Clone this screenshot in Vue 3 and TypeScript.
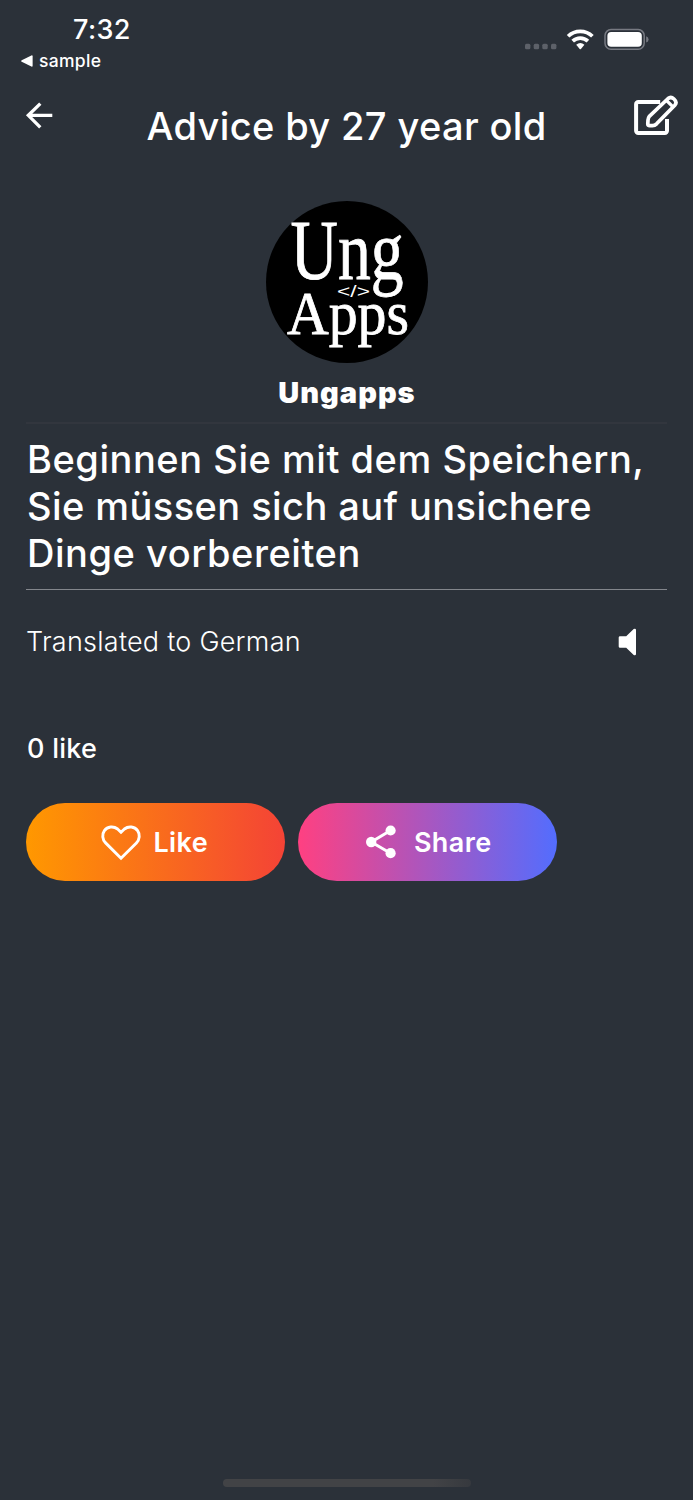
<script setup lang="ts">
const time = '7:32'
const previousApp = 'sample'
const title = 'Advice by 27 year old'
const author = 'Ungapps'
const advice = ['Beginnen Sie mit dem Speichern,', 'Sie müssen sich auf unsichere', 'Dinge vorbereiten']
const likes = 0
</script>

<template>
  <main class="screen">
    <div class="status">
      <div class="clock">
        <span class="time">{{ time }}</span>
        <span class="back-app">
          <svg width="12" height="12" viewBox="0 0 12 12"><path d="M.7 5.2 10.4.4Q11.6 0 11.6 1.2v9.6q0 1.2-1.2.8L.7 6.8Q-.4 6 .7 5.2Z" fill="#fff" /></svg>
          <span class="prev">{{ previousApp }}</span>
        </span>
      </div>
      <div class="signals">
        <svg width="126" height="24" viewBox="524 28 126 24">
          <g fill="#5d6169">
            <rect x="525" y="43.8" width="5.4" height="5.4" rx="1.5" />
            <rect x="533.7" y="43.8" width="5.4" height="5.4" rx="1.5" />
            <rect x="542.3" y="43.8" width="5.4" height="5.4" rx="1.5" />
            <rect x="551" y="43.8" width="5.4" height="5.4" rx="1.5" />
          </g>
          <g fill="none" stroke="#fff" stroke-width="3.7">
            <path d="M568.1 36.3a17.3 17.3 0 0 1 24.3 0" />
            <path d="M572.7 41.1a11 11 0 0 1 15.2 0" />
          </g>
          <path d="M576.2 44.7q4.1-3.5 8.2 0l-3.5 4.2q-.6.7-1.2 0Z" fill="#fff" />
          <rect x="605" y="29.6" width="39.2" height="19.6" rx="6" fill="none" stroke="#777a82" stroke-width="1.5" />
          <rect x="607.4" y="32" width="34.4" height="14.8" rx="3.8" fill="#fff" />
          <path d="M646.2 36.2q2.4 1 2.4 3.2t-2.4 3.2Z" fill="#777a82" />
        </svg>
      </div>
    </div>

    <header class="bar">
      <svg class="arrow" width="28" height="28" viewBox="0 0 28 28" fill="none" stroke="#fff" stroke-width="3.3"><path d="M27.3 14.3H3M15.3 2.6 3.3 14.3l12 12" /></svg>
      <h1>{{ title }}</h1>
      <svg class="edit" width="46" height="42" viewBox="633 95 46 42" fill="none" stroke="#fff" stroke-width="4" stroke-linejoin="round">
        <path d="M660.2 102H638.3a2.2 2.2 0 0 0-2.2 2.2v26.5a2.2 2.2 0 0 0 2.2 2.2h26.5a2.2 2.2 0 0 0 2.2-2.2V119" />
        <path d="m649.3 116.3 18.8-17.8q2.8-2.3 5.9.5 3.5 3.2.8 6.2l-18.2 18.6q-1.8 1.7-4.2 1.8l-2.7.1q-2 0-1.9-2l.2-3.6q.1-2.3 1.3-3.8Z" stroke-width="3.7" />
        <path d="m666.5 100.5 6 5.9" stroke-width="3.2" />
      </svg>
    </header>

    <section class="profile">
      <svg class="avatar" width="162" height="162" viewBox="0 0 162 162">
        <circle cx="81" cy="81" r="81" fill="#000" />
        <g fill="#fff" class="wordmark">
          <text x="24.5" y="77.5" font-size="84" textLength="113" lengthAdjust="spacingAndGlyphs">Ung</text>
          <text x="21" y="133" font-size="61" textLength="122" lengthAdjust="spacingAndGlyphs">Apps</text>
        </g>
        <text class="code" x="71" y="96" font-size="17" textLength="33" lengthAdjust="spacingAndGlyphs" fill="#fff">&lt;/&gt;</text>
      </svg>
      <h2>{{ author }}</h2>
    </section>

    <section class="advice">
      <p v-for="line in advice" :key="line">{{ line }}</p>
    </section>

    <div class="translation">
      <span>Translated to German</span>
      <svg width="20" height="28" viewBox="0 0 20 28"><path d="M2 8.3h6.2L15.7.9Q18 .1 18 2v24q0 1.9-2.3 1.1L8.2 19.700H2Q.7 19.7.7 18.4V9.6Q.7 8.3 2 8.3Z" fill="#fff" /></svg>
    </div>

    <p class="likes">{{ likes }} like</p>

    <div class="actions">
      <button class="like" type="button">
        <svg width="40" height="36" viewBox="0 0 40 36" fill="none" stroke="#fff" stroke-width="2.9"><path d="M20 33.2 4.6 17.9C1.2 14.4.9 9.3 3.4 5.7 6.5 1.3 12.5.8 16.6 4L20 7.3 23.4 4C27.5.8 33.5 1.3 36.6 5.7 39.1 9.3 38.8 14.4 35.4 17.9Z" /></svg>
        <span>Like</span>
      </button>
      <button class="share" type="button">
        <svg width="30" height="34" viewBox="0 0 30 34" fill="#fff"><path d="M24.5 5.5 5.3 17l19.2 11.2" fill="none" stroke="#fff" stroke-width="3" /><circle cx="24.6" cy="5.5" r="5.1" /><circle cx="5.2" cy="17" r="5.2" /><circle cx="24.6" cy="28.2" r="5.1" /></svg>
        <span>Share</span>
      </button>
    </div>

    <div class="home"></div>
  </main>
</template>

<style>
html, body { margin: 0; background: #2b3139; }
</style>

<style scoped>
.screen { box-sizing: border-box; width: 693px; height: 1500px; overflow: hidden; display: flex; flex-direction: column; background: #2b3139; color: #fff; font-family: Inter, "Liberation Sans", sans-serif; }
svg { display: block; flex: none; }
h1, h2, p { margin: 0; white-space: nowrap; }
.status { height: 80px; display: flex; justify-content: space-between; }
.clock { display: flex; flex-direction: column; padding: 14px 0 0 21px; }
.time { margin-left: 52px; font-size: 27px; line-height: 32px; font-weight: 500; letter-spacing: 0.4px; }
.back-app { display: flex; align-items: center; gap: 6px; height: 24px; margin-top: 3px; }
.back-app svg { margin-top: -1px; }
.prev { font-size: 17.5px; line-height: 24px; font-weight: 500; letter-spacing: 0.3px; margin-top: -1px; }
.signals { padding: 28px 43px 0 0; }
.bar { height: 121px; display: flex; justify-content: space-between; align-items: flex-start; padding: 0 14px 0 25px; box-sizing: border-box; }
.arrow { margin-top: 21px; }
.edit { margin-top: 15px; }
h1 { margin-top: 22px; margin-left: 7px; font-size: 38px; line-height: 48px; font-weight: 500; letter-spacing: 0.37px; }
.profile { margin: 0 26px; height: 221px; display: flex; flex-direction: column; align-items: center; border-bottom: 2px solid #32363e; }
.wordmark { font-family: "Liberation Serif", serif; stroke: #fff; stroke-width: 0.8px; }
.code { font-family: "Liberation Sans", sans-serif; }
h2 { margin-top: 12px; padding-left: 1px; font-size: 29px; line-height: 36px; font-weight: 900; letter-spacing: 1px; }
.advice { height: 153px; margin: 0 26px; padding-top: 12px; border-bottom: 1.5px solid #83868c; }
.advice p { padding-left: 1px; font-size: 38px; line-height: 47px; font-weight: 500; letter-spacing: 0.54px; }
.advice p:nth-child(2) { letter-spacing: 0.43px; }
.translation { display: flex; justify-content: space-between; align-items: center; height: 40px; margin: 32px 55px 0 26px; font-size: 27px; font-weight: 300; letter-spacing: 0.25px; }
.translation span { margin-top: -2px; }
.likes { margin: 69px 0 0 27px; font-size: 27px; line-height: 36px; font-weight: 500; letter-spacing: 0.25px; }
.actions { display: flex; gap: 13px; margin: 36px 0 0 26px; }
button { width: 259px; height: 78px; border: 0; padding: 0; border-radius: 39px; display: flex; align-items: center; justify-content: center; color: #fff; font: 600 27px/36px Inter, "Liberation Sans", sans-serif; letter-spacing: 0.4px; }
button span { margin-top: 2px; }
.like { gap: 12px; padding-right: 1.5px; background: linear-gradient(90deg, #ff9800, #f44336); }
.like svg { margin-top: 2px; }
.share { gap: 17.5px; padding-left: 3px; background: linear-gradient(90deg, #ff4081, #536dfe); }
.home { width: 248px; height: 8px; margin: auto auto 13px 223px; border-radius: 4px; background: linear-gradient(90deg, #424346 85%, #36393e); }
</style>
